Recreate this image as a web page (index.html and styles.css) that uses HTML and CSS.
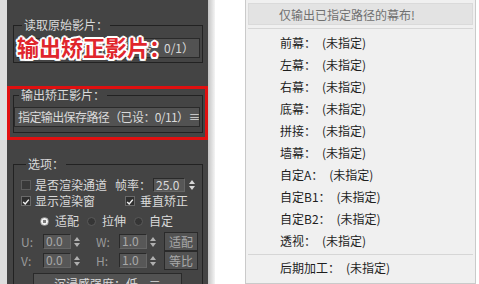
FILE: index.html
```html
<!DOCTYPE html>
<html lang="zh-CN">
  <head>
    <meta charset="UTF-8" />
    <title>矫正输出</title>
    <link rel="stylesheet" href="styles.css">
  </head>
  <body>
    <div class="page">
      <div class="gutter"></div>

      <!-- 卷展栏 -->
      <div class="panel">
        <fieldset class="group group-first">
          <legend>读取原始影片：</legend>
          <div class="btn btn-wide">指定原始影片路径（已设：0/1）</div>
        </fieldset>

        <div class="mark">
          <fieldset class="group group-output">
            <legend>输出矫正影片：</legend>
            <div class="btn btn-wide">指定输出保存路径（已设：0/11）≡</div>
          </fieldset>
        </div>

        <fieldset class="group group-options">
          <legend>选项：</legend>
          <div class="row">
            <span class="check"></span>
            <span class="label">是否渲染通道</span>
            <span class="label fps">帧率：</span>
            <span class="field field-fps">25.0</span>
            <span class="arrows">
              <svg width="8" height="12" viewBox="0 0 8 12"><path d="M4 1 L7 5 L1 5 Z M4 11 L7 7 L1 7 Z" fill="#d8d8d8"/></svg>
            </span>
          </div>
          <div class="row">
            <span class="check checked">
              <svg width="10" height="10" viewBox="0 0 10 10"><path d="M1.5 5 L4 7.5 L8.5 2" stroke="#f2f2f2" stroke-width="1.8" fill="none"/></svg>
            </span>
            <span class="label">显示渲染窗</span>
            <span class="check checked second">
              <svg width="10" height="10" viewBox="0 0 10 10"><path d="M1.5 5 L4 7.5 L8.5 2" stroke="#f2f2f2" stroke-width="1.8" fill="none"/></svg>
            </span>
            <span class="label">垂直矫正</span>
          </div>
          <div class="row row-radio">
            <span class="radio on"></span><span class="label">适配</span>
            <span class="radio"></span><span class="label">拉伸</span>
            <span class="radio"></span><span class="label">自定</span>
          </div>
          <div class="row row-size">
            <span class="axis">U:</span>
            <span class="field field-small">0.0</span>
            <span class="arrows dim">
              <svg width="8" height="12" viewBox="0 0 8 12"><path d="M4 1 L7 5 L1 5 Z M4 11 L7 7 L1 7 Z" fill="#b0b0b0"/></svg>
            </span>
            <span class="axis axis-right">W:</span>
            <span class="field field-small">1.0</span>
            <span class="arrows dim">
              <svg width="8" height="12" viewBox="0 0 8 12"><path d="M4 1 L7 5 L1 5 Z M4 11 L7 7 L1 7 Z" fill="#b0b0b0"/></svg>
            </span>
            <span class="btn btn-small">适配</span>
          </div>
          <div class="row row-size">
            <span class="axis">V:</span>
            <span class="field field-small">0.0</span>
            <span class="arrows dim">
              <svg width="8" height="12" viewBox="0 0 8 12"><path d="M4 1 L7 5 L1 5 Z M4 11 L7 7 L1 7 Z" fill="#b0b0b0"/></svg>
            </span>
            <span class="axis axis-right">H:</span>
            <span class="field field-small">1.0</span>
            <span class="arrows dim">
              <svg width="8" height="12" viewBox="0 0 8 12"><path d="M4 1 L7 5 L1 5 Z M4 11 L7 7 L1 7 Z" fill="#b0b0b0"/></svg>
            </span>
            <span class="btn btn-small">等比</span>
          </div>
          <div class="btn btn-depth">沉浸感强度：低&nbsp;&nbsp;&nbsp;&nbsp;≡</div>
        </fieldset>
      </div>

      <div class="shade"></div>

      <!-- 右键菜单 -->
      <div class="menu">
        <div class="menu-head">仅输出已指定路径的幕布!</div>
        <div class="menu-sep"></div>
        <div class="menu-item"><span class="key">前幕：</span>(未指定)</div>
        <div class="menu-item"><span class="key">左幕：</span>(未指定)</div>
        <div class="menu-item"><span class="key">右幕：</span>(未指定)</div>
        <div class="menu-item"><span class="key">底幕：</span>(未指定)</div>
        <div class="menu-item"><span class="key">拼接：</span>(未指定)</div>
        <div class="menu-item"><span class="key">墙幕：</span>(未指定)</div>
        <div class="menu-item"><span class="key">自定A：</span>(未指定)</div>
        <div class="menu-item"><span class="key">自定B1：</span>(未指定)</div>
        <div class="menu-item"><span class="key">自定B2：</span>(未指定)</div>
        <div class="menu-item"><span class="key">透视：</span>(未指定)</div>
        <div class="menu-sep menu-sep-low"></div>
        <div class="menu-item"><span class="key">后期加工：</span>(未指定)</div>
      </div>
    </div>

    <div class="callout">输出矫正影片：</div>
  </body>
</html>
```

FILE: styles.css
```css
:root {
  --panel-bg: #444444;
  --panel-text: #dadada;
  --line-dark: #222222;
  --btn-bg: #525252;
  --field-bg: #575757;
  --menu-bg: #f0f0f0;
}
body {
  margin: 0;
  width: 479px;
  height: 284px;
  overflow: hidden;
  background: #ffffff;
  font-family: "Noto Sans CJK SC", "Noto Sans", sans-serif;
  font-size: 12px;
  position: relative;
}
.page {
  display: flex;
  height: 284px;
}
.gutter {
  width: 7px;
  background: #dedede;
}
.shade {
  width: 7px;
  background: linear-gradient(to right, #c4c4c4, #f4f4f4);
}

/* 卷展栏 */
.panel {
  width: 201px;
  background: var(--panel-bg);
  color: var(--panel-text);
  padding-top: 18px;
  box-sizing: border-box;
}
.group {
  margin: 0 5px 0 6px;
  padding: 6px 2px 4px 3px;
  border: 1px solid var(--line-dark);
  min-width: 0;
}
.group legend {
  padding: 0 2px;
  margin-left: 5px;
  line-height: 14px;
}
.group-first {
  margin-bottom: 23px;
}
.mark {
  border: 3px solid #e01010;
  padding-bottom: 4px;
}
.group-output {
  margin: 0 2px 0 3px;
  padding: 6px 2px 5px 0;
}
.group-output legend {
  line-height: 12px;
}
.group-output .btn-wide {
  letter-spacing: -0.6px;
  padding-left: 3px;
}
.group-options {
  margin-top: 17px;
  padding: 6px 4px 0 7px;
  border-bottom: none;
}
.btn {
  background: var(--btn-bg);
  border: 1px solid #2a2a2a;
  box-sizing: border-box;
  white-space: nowrap;
  overflow: hidden;
}
.btn-wide {
  height: 20px;
  line-height: 18px;
  padding-left: 2px;
}
.btn-small {
  width: 34px;
  height: 19px;
  line-height: 17px;
  text-align: center;
  margin-left: 6px;
  color: #a8a8a8;
}
.btn-depth {
  width: 149px;
  height: 22px;
  line-height: 20px;
  margin: 3px 0 0 12px;
  text-align: center;
}

.row {
  display: flex;
  align-items: center;
  height: 16px;
}
.row-radio {
  margin-top: 4px;
  padding-left: 19px;
}
.row-size {
  height: 19px;
}
.row-radio + .row-size {
  margin-top: 3px;
}
.label {
  line-height: 16px;
  white-space: nowrap;
}
.fps {
  margin-left: 8px;
}
.check {
  width: 10px;
  height: 10px;
  box-sizing: border-box;
  background: #393939;
  border: 1px solid #5c5c5c;
  margin-right: 4px;
  display: flex;
}
.check.checked {
  background: #2f2f2f;
  border-color: #6a6a6a;
}
.check.second {
  margin-left: 30px;
  margin-right: 5px;
}
.radio {
  width: 9px;
  height: 9px;
  box-sizing: border-box;
  border-radius: 50%;
  background: #353535;
  border: 1px solid #5a5a5a;
  margin: 0 6px 0 8px;
}
.row-radio .radio:first-child {
  margin-left: 0;
}
.radio.on {
  background: radial-gradient(circle, #7a7a7a 0 1.5px, #f0f0f0 2px);
  border-color: #9a9a9a;
}
.field {
  background: var(--field-bg);
  border: 1px solid #2a2a2a;
  border-right-color: #666;
  border-bottom-color: #666;
  box-sizing: border-box;
  line-height: 12px;
  padding-left: 2px;
}
.field-fps {
  width: 32px;
  height: 14px;
  margin-left: 2px;
}
.field-small {
  width: 28px;
  height: 15px;
  color: #a8a8a8;
}
.arrows {
  width: 10px;
  display: flex;
  justify-content: center;
  margin-left: 2px;
}
.arrows.dim {
  margin-left: 1px;
}
.axis {
  width: 22px;
  color: #9a9a9a;
}
.axis-right {
  width: 23px;
  margin-left: 14px;
}

/* 右键菜单 */
.menu {
  margin-left: 30px;
  width: 231px;
  height: 284px;
  box-sizing: border-box;
  background: var(--menu-bg);
  border: 1px solid #cacaca;
  border-top: none;
  padding: 3px 2px 3px 2px;
  color: #1e1e1e;
}
.menu-head {
  height: 22px;
  line-height: 22px;
  box-sizing: border-box;
  background: #e3e3e3;
  border: 1px solid #dadada;
  padding-left: 30px;
  color: #707070;
}
.menu-sep {
  height: 1px;
  background: #d6d6d6;
  margin: 3px 0 3px;
}
.menu-sep-low {
  margin: 2px 0 2px;
}
.menu-item {
  height: 22px;
  line-height: 22px;
  padding-left: 32px;
  white-space: nowrap;
}
.menu-item .key {
  margin-right: 6px;
}

/* 标注文字 */
.callout {
  position: absolute;
  left: 17px;
  top: 33px;
  font-size: 22px;
  line-height: 26px;
  font-weight: bold;
  color: #e0262c;
  white-space: nowrap;
  text-shadow: -2px 0 #fff, 2px 0 #fff, 0 -2px #fff, 0 2px #fff,
    -1.5px -1.5px #fff, 1.5px -1.5px #fff, -1.5px 1.5px #fff, 1.5px 1.5px #fff,
    0 0 3px #777;
}
```
